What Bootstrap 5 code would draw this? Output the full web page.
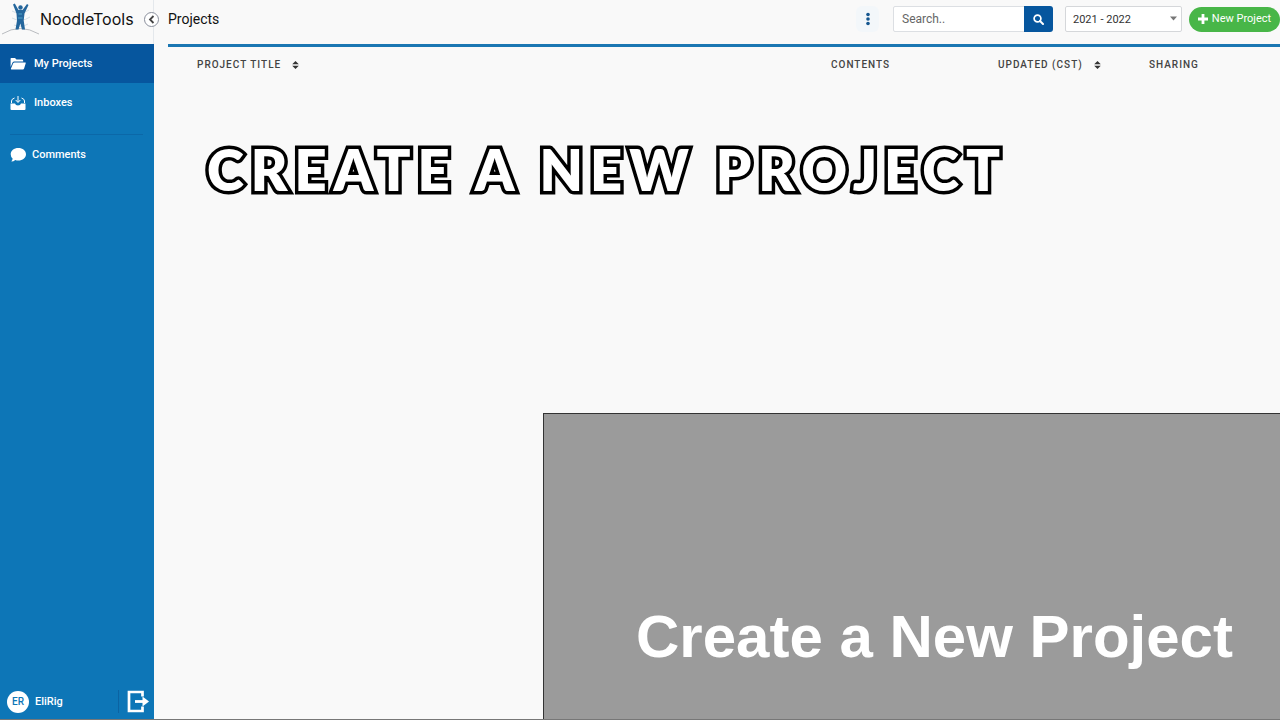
<!DOCTYPE html>
<html lang="en">
<head>
<meta charset="utf-8">
<meta name="viewport" content="width=device-width, initial-scale=1">
<title>NoodleTools - Projects</title>
<link href="https://cdn.jsdelivr.net/npm/bootstrap@5.3.0/dist/css/bootstrap.min.css" rel="stylesheet">
<style>
  :root { --nt-blue: #0d76b7; --nt-deep: #06569e; --nt-page: #f9f9f9; }
  body { font-family: Roboto, "Liberation Sans", sans-serif; font-size: 11px; line-height: 16px; color: #222; background: var(--nt-page); border-bottom: 1px solid #777; }
  svg { display: block; flex: none; }
  .side { width: 154px; flex: none; }
  .top-row { height: 44px; }
  .brand { font-family: Inter, "DejaVu Sans", sans-serif; font-size: 16px; line-height: 20px; color: #111; padding: 0 0 6px 1px; border-right: 1px solid #e4e8ec; }
  .collapse-btn { width: 15px; height: 15px; top: 12px; right: -6px; border: 1px solid #8a8f9c; background: #fff; color: #444; }
  .side-nav { background: var(--nt-blue); }
  .side-link { height: 39px; padding-left: 10px; gap: 8px; color: #fff; font-weight: 500; text-decoration: none; }
  .side-link.current { background: var(--nt-deep); padding-top: 1px; }
  .side-link.talk { gap: 6px; }
  .side-rule { margin: 12px 11px 0 10px; border-top: 1px solid #0b68a8; opacity: 1; }
  .user-bar { color: #fff; font-weight: 500; padding: 0 4px 6px 7px; }
  .avatar { width: 22px; height: 22px; margin-right: 6px; background: #fff; color: var(--nt-blue); font-size: 10px; }
  .user-split { width: 1px; height: 23px; background: #0b63a2; }
  .page-name { font-size: 14px; line-height: 20px; color: #111; }
  .top-bar { padding: 0 0 6px 14px; }
  .more-btn { width: 23px; height: 26px; background: #f3f7fa; color: #15568f; }
  .search-box { width: 160px; margin-left: 14px; }
  .search-box .form-control { font-size: 12px; line-height: 16px; height: 26px; padding: 4px 8px; border-color: #dcdfe3; border-radius: 2px; color: #333; }
  .search-box .form-control::placeholder { color: #666; opacity: 1; }
  .search-box .btn { width: 29px; height: 26px; padding: 0; background: var(--nt-deep); border-radius: 3px; }
  .year-box { width: 117px; margin-left: 12px; color: #777; }
  .year-box .form-select { font-size: 11px; line-height: 16px; height: 26px; padding: 5px 20px 3px 7px; border-color: #d5d7da; border-radius: 2px; color: #333; background-image: none; background-color: #fff; }
  .year-box svg { position: absolute; right: 5px; top: 10px; pointer-events: none; }
  .new-btn { width: 91px; height: 25px; margin-left: 7px; gap: 4px; background: #48b648; color: #fff; font-size: 11px; line-height: 16px; }
  .new-btn:hover { background: #3ba33b; color: #fff; }
  .work { margin-left: 14px; border-top: 3px solid #1b77b3; }
  .project-table { table-layout: fixed; --bs-table-bg: transparent; }
  .project-table th { padding: 10px 0 8px; border: 0; font-size: 10px; line-height: 16px; font-weight: 500; letter-spacing: 1px; color: #444; white-space: nowrap; }
  .project-table th:first-child { padding-left: 29px; }
  .c-contents { width: 167px; } .c-updated { width: 151px; } .c-sharing { width: 131px; }
  .sort-btn { color: #333; margin-left: 11px; }
  .outlined { font-family: Lato, "Open Sans", sans-serif; font-weight: 800; font-size: 56px; line-height: 70px; letter-spacing: 7px; color: #fff; -webkit-text-stroke: 7px #000; paint-order: stroke fill; margin: 54px 0 0 39px; white-space: nowrap; }
  .caption-panel { margin-left: 389px; padding: 188px 0 48px 92px; background: #9b9b9b; border: solid #333; border-width: 1px 0 0 1px; }
  .caption-text { font-family: "Liberation Sans", Arial, sans-serif; font-weight: 700; font-size: 60px; line-height: 69px; color: #fff; white-space: nowrap; }
</style>
</head>
<body class="d-flex min-vh-100 overflow-x-hidden">
  <aside class="side d-flex flex-column">
    <div class="top-row brand d-flex align-items-center position-relative">
      <svg width="39" height="36" viewBox="0 0 39 36" fill="none" aria-hidden="true">
        <path d="M1 33Q19 22 38 33" stroke="#b9bcc0"/>
        <path d="M11 10q8 5 17-1M11 17q9 5 18-1M13 24q7 3 14-1" stroke="#d3dee6"/>
        <path d="M12 3.500l1.800-1 3.700 6.500h4l4.500-6 1.500 1-4 8.500-.8 7 1.300 9h-3l-1.700-6-1.800 6h-3l1.500-9-.5-7z" fill="#24669c"/>
        <circle cx="19.500" cy="6.500" r="2.200" fill="#24669c"/>
        <path d="M17.500 13h3.500M17 17h4.500" stroke="#4da2cb"/>
      </svg>
      <span>NoodleTools</span>
      <button type="button" class="collapse-btn btn rounded-circle p-0 position-absolute d-flex align-items-center justify-content-center" aria-label="Collapse menu">
        <svg width="7" height="9" viewBox="0 0 7 9" fill="none" stroke="currentColor" stroke-width="1.800"><path d="M5.500 1 2 4.500 5.500 8"/></svg>
      </button>
    </div>
    <nav class="side-nav flex-grow-1 d-flex flex-column" aria-label="Main">
      <a href="#" class="side-link current d-flex align-items-center" aria-current="page">
        <svg width="16" height="12" viewBox="0 0 16 12" fill="#fff"><path d="M1.200 0H5l1.500 1.500H12q1.200 0 1.200 1.200V3.500H4.200q-1 0-1.500.8L.6 9V.8Q.6 0 1.200 0z"/><path d="M4.500 4.500H15.300q.7 0 .5.600l-1.700 5.500q-.3.900-1.200.9H1.500q-.9 0-.6-.8L3.200 5.300q.4-.8 1.300-.8z"/></svg>
        My Projects
      </a>
      <a href="#" class="side-link d-flex align-items-center">
        <svg width="16" height="14" viewBox="0 0 16 14" fill="none"><path d="M.5 7.500H5q.5 2 3 2t3-2h4.500V13q0 1-1 1h-13q-1 0-1-1z" fill="#fff"/><path d="M1.500 7V5q0-2 3-3M14.500 7V5q0-2-3-3M8 0v6M5.700 4 8 6.500 10.300 4" stroke="#fff"/></svg>
        Inboxes
      </a>
      <hr class="side-rule mb-0">
      <a href="#" class="side-link talk d-flex align-items-center">
        <svg width="16" height="14" viewBox="0 0 16 14" fill="#fff"><path d="M8.300 0C12.700 0 16 2.700 16 6.300s-3.300 6.300-7.700 6.300q-1.600 0-3-.5Q3.600 13.600 1.300 13.600q1.300-1.500 1.300-3Q.7 8.900.7 6.300C.7 2.700 4 0 8.300 0z"/></svg>
        Comments
      </a>
      <div class="user-bar d-flex align-items-center mt-auto">
        <span class="avatar rounded-circle d-flex align-items-center justify-content-center">ER</span>
        <span>EliRig</span>
        <span class="user-split ms-auto me-2"></span>
        <button type="button" class="btn p-0 border-0" aria-label="Sign out">
          <svg width="23" height="23" viewBox="0 0 22 23" fill="none"><path d="M15 6.500V2H1.500V21H15V16.500" stroke="#fff" stroke-width="2.700"/><path d="M7.500 11.500H17" stroke="#fff" stroke-width="2.800"/><path d="M15 6.500 21.500 11.500 15 16.500z" fill="#fff"/></svg>
        </button>
      </div>
    </nav>
  </aside>

  <main class="flex-grow-1 d-flex flex-column">
    <header class="top-row top-bar d-flex align-items-center">
      <h1 class="page-name m-0 fw-normal">Projects</h1>
      <button type="button" class="more-btn btn border-0 p-0 ms-auto d-flex align-items-center justify-content-center" aria-label="More options">
        <svg width="4" height="14" viewBox="0 0 4 14" fill="currentColor"><circle cx="2" cy="2.500" r="1.800"/><circle cx="2" cy="7" r="1.800"/><circle cx="2" cy="11.500" r="1.800"/></svg>
      </button>
      <form class="search-box input-group flex-nowrap" role="search">
        <input type="text" class="form-control" placeholder="Search.." aria-label="Search">
        <button type="button" class="btn border-0 d-flex align-items-center justify-content-center" aria-label="Search">
          <svg width="11" height="11" viewBox="0 0 11 11" fill="none" stroke="#fff"><circle cx="4.500" cy="4.500" r="3.400" stroke-width="1.700"/><path d="M7 7l3 3" stroke-width="2" stroke-linecap="round"/></svg>
        </button>
      </form>
      <div class="year-box position-relative">
        <select class="form-select" aria-label="School year"><option>2021 - 2022</option></select>
        <svg width="7" height="5" viewBox="0 0 7 5" fill="currentColor"><path d="M0 .5h7L3.500 4.500z"/></svg>
      </div>
      <button type="button" class="new-btn btn rounded-pill border-0 p-0 d-flex align-items-center justify-content-center text-nowrap">
        <svg width="10" height="10" viewBox="0 0 10 10"><path d="M5 0v10M0 5h10" stroke="#fff" stroke-width="2.800"/></svg>
        New Project
      </button>
    </header>

    <section class="work">
      <table class="project-table table mb-0">
        <thead>
          <tr>
            <th scope="col">PROJECT TITLE<button type="button" class="sort-btn btn border-0 p-0" aria-label="Sort by title"><svg width="7" height="8" viewBox="0 0 7 8" fill="currentColor"><path d="M3.500 0 6.800 3.300H.2zM.2 4.700h6.600L3.500 8z"/></svg></button></th>
            <th scope="col" class="c-contents">CONTENTS</th>
            <th scope="col" class="c-updated">UPDATED (CST)<button type="button" class="sort-btn btn border-0 p-0" aria-label="Sort by date"><svg width="7" height="8" viewBox="0 0 7 8" fill="currentColor"><path d="M3.500 0 6.800 3.300H.2zM.2 4.700h6.600L3.500 8z"/></svg></button></th>
            <th scope="col" class="c-sharing">SHARING</th>
          </tr>
        </thead>
      </table>
      <h2 class="outlined mb-0">CREATE A NEW PROJECT</h2>
    </section>

    <section class="caption-panel mt-auto">
      <p class="caption-text mb-0">Create a New Project</p>
    </section>
  </main>
<script src="https://cdn.jsdelivr.net/npm/bootstrap@5.3.0/dist/js/bootstrap.bundle.min.js"></script>
</body>
</html>
